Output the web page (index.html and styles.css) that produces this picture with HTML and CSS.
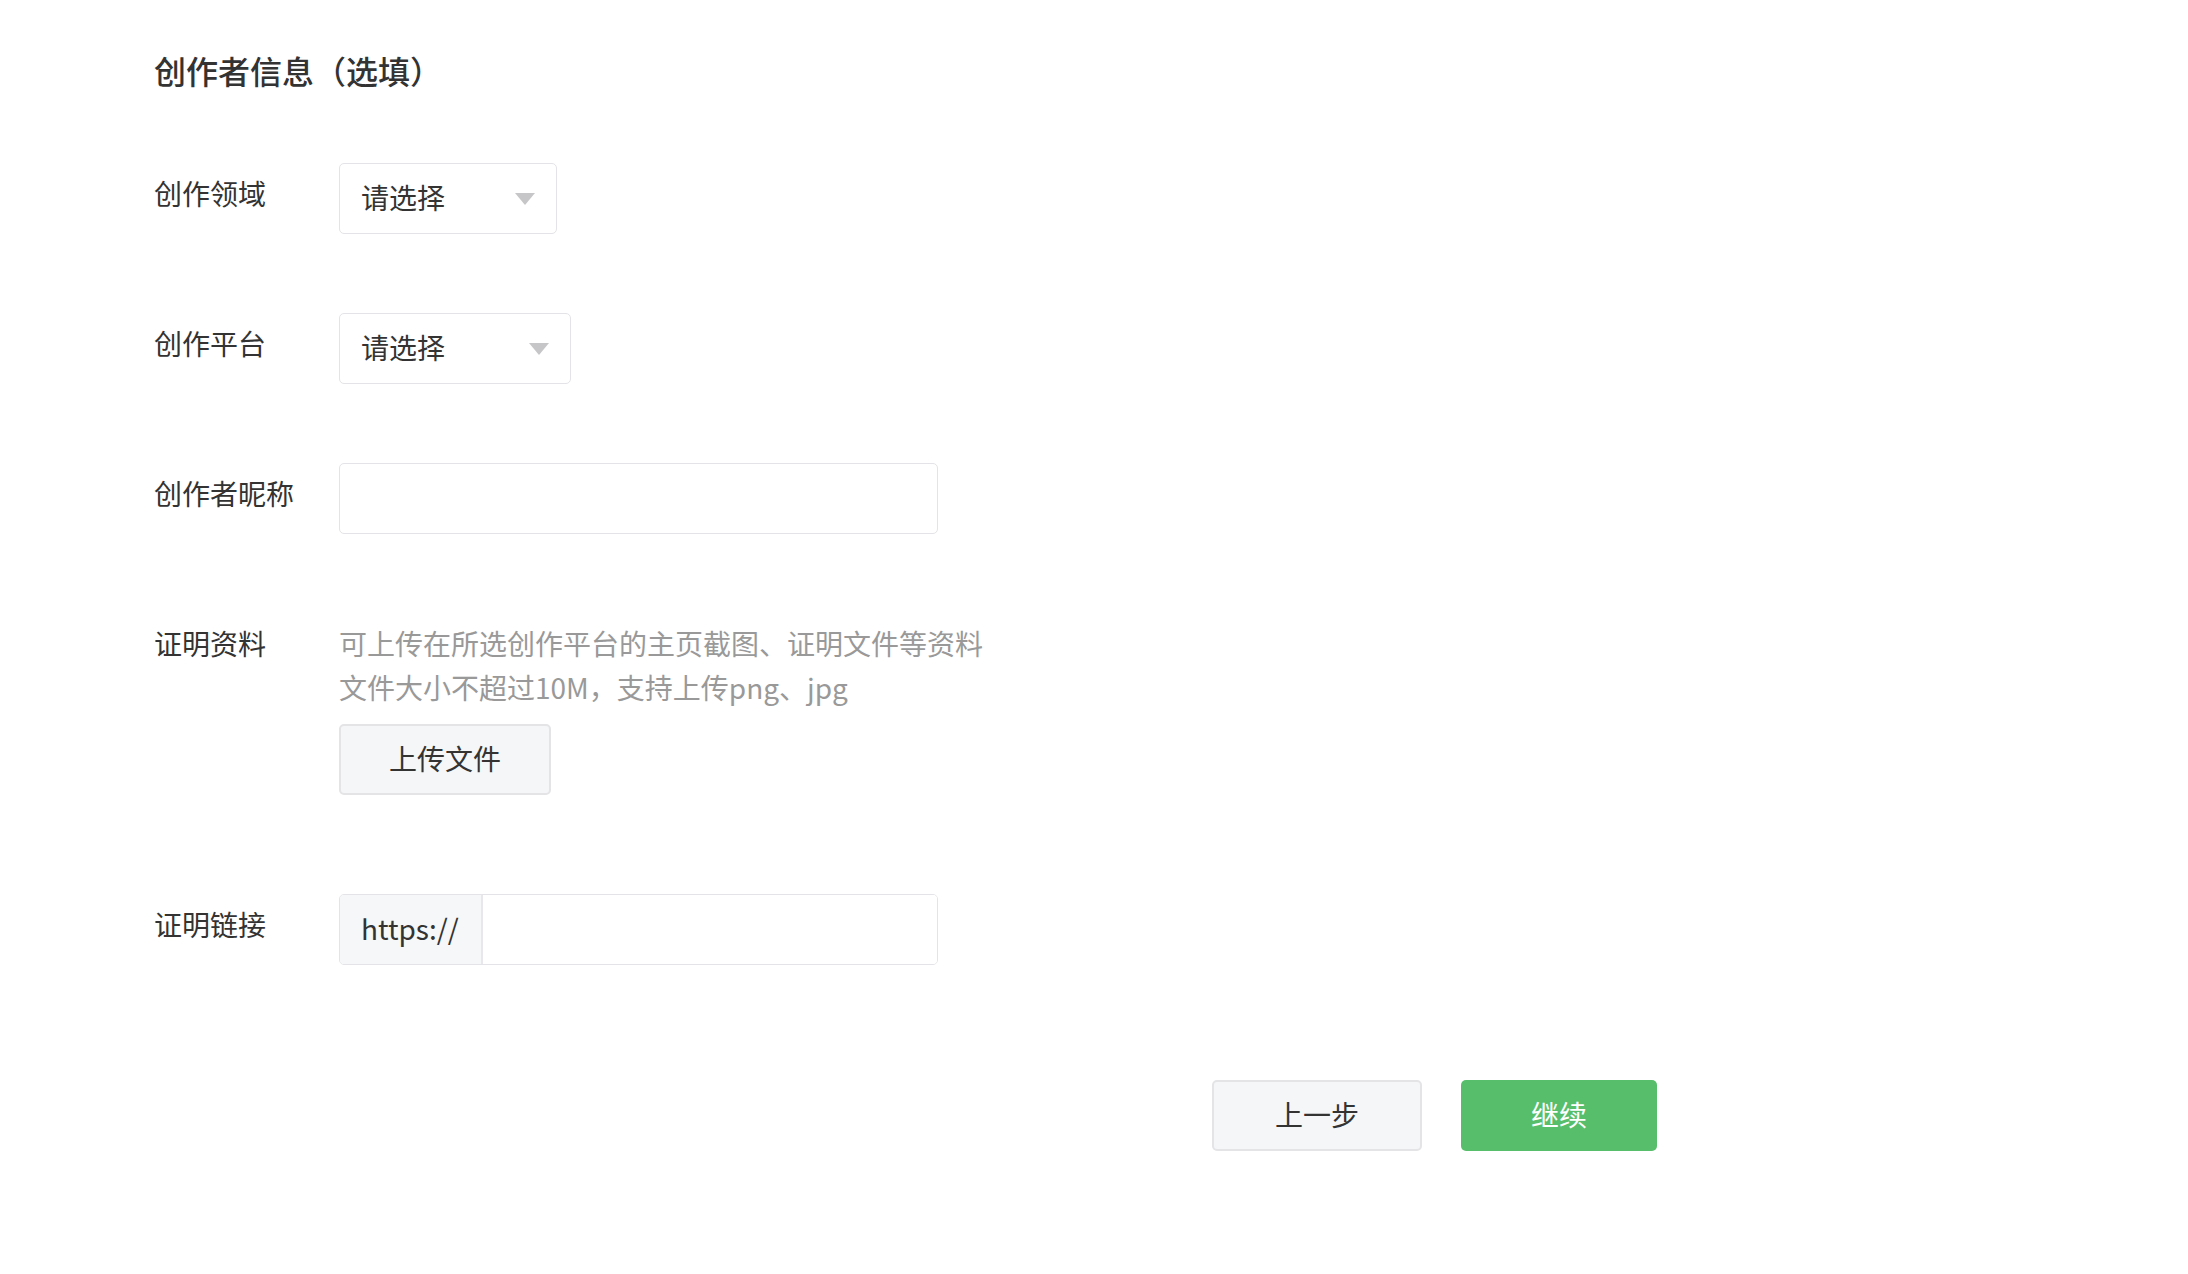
FILE: index.html
```html
<!DOCTYPE html>
<html lang="zh-CN">
<head>
<meta charset="UTF-8">
<meta name="viewport" content="width=device-width, initial-scale=1.0">
<title>创作者信息</title>
<link rel="stylesheet" href="styles.css">
</head>
<body>

	<div class="page">
		<h2 class="title">创作者信息（选填）</h2>

		<div class="form">
			<div class="row">
				<label class="label">创作领域</label>
				<div class="field">
					<div class="select select-field">
						<span>请选择</span>
						<i class="arrow"></i>
					</div>
				</div>
			</div>

			<div class="row">
				<label class="label">创作平台</label>
				<div class="field">
					<div class="select select-platform">
						<span>请选择</span>
						<i class="arrow"></i>
					</div>
				</div>
			</div>

			<div class="row">
				<label class="label">创作者昵称</label>
				<div class="field">
					<input class="input" type="text">
				</div>
			</div>

			<div class="row row-upload">
				<label class="label">证明资料</label>
				<div class="field">
					<p class="hint">可上传在所选创作平台的主页截图、证明文件等资料<br>文件大小不超过10M，支持上传png、jpg</p>
					<button class="btn btn-default btn-upload">上传文件</button>
				</div>
			</div>

			<div class="row">
				<label class="label">证明链接</label>
				<div class="field">
					<div class="input-group">
						<span class="addon">https://</span>
						<input class="input-inner" type="text">
					</div>
				</div>
			</div>
		</div>

		<div class="actions">
			<button class="btn btn-default btn-prev">上一步</button>
			<button class="btn btn-primary btn-next">继续</button>
		</div>
	</div>

</body>
</html>
```

FILE: styles.css
```css
html, body {
	margin: 0;
	padding: 0;
	background: #fff;
}

body {
	font-family: "Noto Sans CJK SC", "Noto Sans", sans-serif;
	color: #333;
}

.page {
	padding: 48px 0 0 154px;
}

.title {
	margin: 0 0 71px 0;
	font-size: 32px;
	font-weight: 500;
	line-height: 44px;
	color: #333;
}

.row {
	display: flex;
	align-items: flex-start;
	margin-bottom: 79px;
}

.row-upload {
	margin-bottom: 99px;
}

.label {
	width: 185px;
	flex-shrink: 0;
	font-size: 28px;
	line-height: 61px;
	color: #333;
}

.field {
	display: flex;
	flex-direction: column;
	align-items: flex-start;
}

/* dropdowns */
.select {
	box-sizing: border-box;
	height: 71px;
	border: 1px solid #e4e4e8;
	border-radius: 5px;
	background: #fff;
	display: flex;
	align-items: center;
	justify-content: space-between;
	padding: 0 21px;
	font-size: 28px;
	color: #333;
}

.select span {
	line-height: 66px;
	margin-bottom: 3px;
}

.select-field {
	width: 218px;
}

.select-platform {
	width: 232px;
}

.arrow {
	width: 0;
	height: 0;
	border-left: 10px solid transparent;
	border-right: 10px solid transparent;
	border-top: 12px solid #c6c6c8;
}

/* text inputs */
.input {
	box-sizing: border-box;
	width: 599px;
	height: 71px;
	border: 1px solid #e4e4e8;
	border-radius: 5px;
	padding: 0 21px;
	font-family: inherit;
	font-size: 28px;
	outline: none;
}

.input-group {
	box-sizing: border-box;
	display: flex;
	width: 599px;
	height: 71px;
	border: 1px solid #e4e4e8;
	border-radius: 5px;
	overflow: hidden;
}

.addon {
	width: 143px;
	box-sizing: border-box;
	padding-left: 21px;
	background: #f6f7f9;
	border-right: 2px solid #e8e8ec;
	font-size: 28px;
	line-height: 66px;
	color: #333;
}

.input-inner {
	flex: 1;
	border: none;
	outline: none;
	font-family: inherit;
	font-size: 28px;
	padding: 0 20px;
}

/* upload */
.hint {
	margin: 8px 0 15px 0;
	font-size: 28px;
	line-height: 44px;
	color: #999;
}

.btn {
	box-sizing: border-box;
	height: 71px;
	border-radius: 5px;
	font-family: inherit;
	font-size: 28px;
	cursor: pointer;
	padding: 0 0 4px 0;
}

.btn-default {
	border: 2px solid #e4e4e7;
	background: #f5f6f8;
	color: #333;
}

.btn-primary {
	border: none;
	background: #57be6b;
	color: #fff;
}

.btn-upload {
	width: 212px;
}

/* bottom buttons */
.actions {
	display: flex;
	gap: 39px;
	margin: 115px 0 0 1058px;
}

.btn-prev {
	width: 210px;
}

.btn-next {
	width: 196px;
}
```
